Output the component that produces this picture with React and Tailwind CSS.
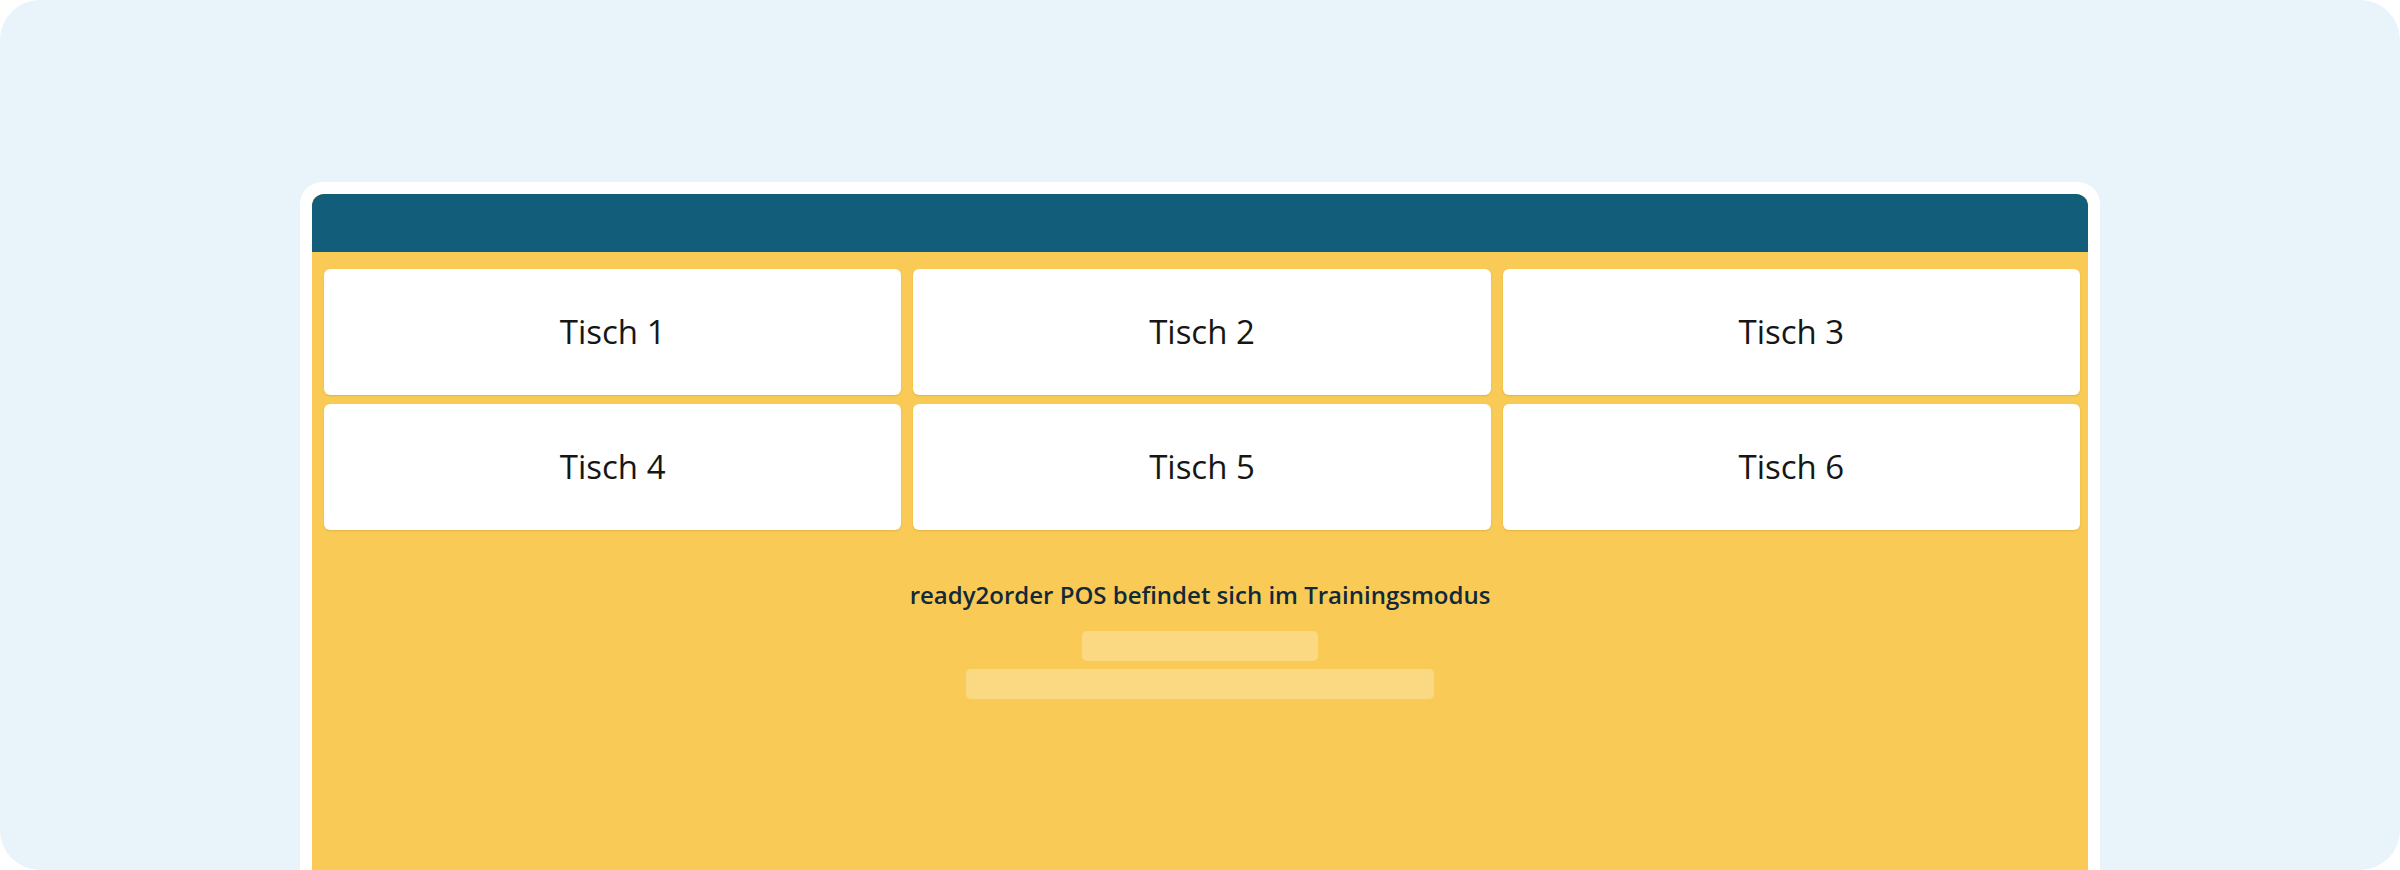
export default function App() {
  const tables = ["Tisch 1", "Tisch 2", "Tisch 3", "Tisch 4", "Tisch 5", "Tisch 6"];
  return (
    <div className="w-[2400px] h-[870px] bg-white overflow-hidden" style={{ fontFamily: '"Open Sans", "Noto Sans", sans-serif' }}>
      <div className="w-full h-full rounded-[40px] bg-[#e8f3fa] flex flex-col items-center pt-[182px] overflow-hidden">
        <div className="w-[1800px] flex-1 bg-white rounded-t-[22px] px-3 pt-3 flex flex-col">
          <div className="flex-1 rounded-t-[12px] overflow-hidden flex flex-col bg-[#f9cb56]">
            <div className="h-[58px] bg-[#115d7a]" />
            <div className="pt-[17px] pl-3 pr-2">
              <div className="grid grid-cols-3 gap-x-3 gap-y-[9px]">
                {tables.map((t) => (
                  <div
                    key={t}
                    className="h-[126px] bg-white rounded-[6px] shadow-[0_1px_2px_rgba(150,110,0,0.25)] flex items-center justify-center text-[33px] font-normal text-[#161616]"
                  >
                    {t}
                  </div>
                ))}
              </div>
            </div>
            <div className="flex flex-col items-center mt-[50px]">
              <div className="text-[24px] leading-[30px] font-semibold text-[#12293a]">
                ready2order POS befindet sich im Trainingsmodus
              </div>
              <div className="mt-[21px] w-[236px] h-[30px] rounded-[5px] bg-[#fbd983]" />
              <div className="mt-2 w-[468px] h-[30px] rounded-[5px] bg-[#fbd983]" />
            </div>
          </div>
        </div>
      </div>
    </div>
  );
}
